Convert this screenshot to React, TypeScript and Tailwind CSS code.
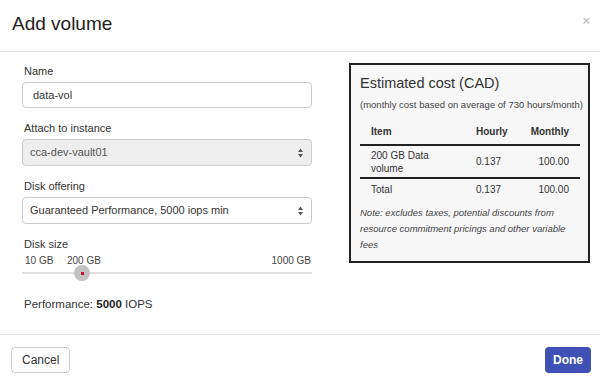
import React from 'react';

const font = { fontFamily: '"Liberation Sans", Arial, sans-serif' };

function SelectArrows() {
  return (
    <svg width="7" height="11" viewBox="0 0 7 11" className="absolute right-[7px] top-1/2 -translate-y-1/2">
      <path d="M3.5 1 L6 4.5 L1 4.5 Z" fill="#555" />
      <path d="M3.5 10 L6 6.5 L1 6.5 Z" fill="#555" />
    </svg>
  );
}

function Field({ label, children }: { label: string; children: React.ReactNode }) {
  return (
    <div className="flex flex-col">
      <label className="text-[11px] leading-[16px] text-[#333] pl-[2px] mb-[3px]">{label}</label>
      {children}
    </div>
  );
}

export default function App() {
  return (
    <div className="w-[600px] h-[382px] bg-white flex flex-col text-[#333]" style={font}>
      <div className="h-[52px] border-b border-[#e5e5e5] flex items-start justify-between pl-[12px] pr-[10px] pt-[12px]">
        <h1 className="text-[19px] leading-[24px] text-[#222]">Add volume</h1>
        <span className="text-[13px] leading-[16px] text-[#c4c4c4] font-bold mt-[1px]">×</span>
      </div>

      <div className="flex-1 flex pt-[11px] pl-[22px]">
        <div className="w-[290px] flex flex-col gap-[12px]">
          <Field label="Name">
            <div className="h-[26px] border border-[#ccc] rounded-[4px] px-[10px] flex items-center text-[11px]">data-vol</div>
          </Field>
          <Field label="Attach to instance">
            <div className="relative h-[27px] border border-[#ccc] rounded-[4px] bg-[#eee] px-[7px] flex items-center text-[11px] text-[#555]">
              cca-dev-vault01
              <SelectArrows />
            </div>
          </Field>
          <Field label="Disk offering">
            <div className="relative h-[27px] border border-[#ccc] rounded-[4px] px-[7px] flex items-center text-[11px] text-[#333]">
              Guaranteed Performance, 5000 iops min
              <SelectArrows />
            </div>
          </Field>
          <div className="flex flex-col">
            <span className="text-[11px] leading-[16px] pl-[2px] mb-[3px]">Disk size</span>
            <div className="relative h-[12px] text-[10px] leading-[12px] text-[#444]">
              <span className="absolute left-[3px]">10 GB</span>
              <span className="absolute left-[45px]">200 GB</span>
              <span className="absolute right-[1px]">1000 GB</span>
            </div>
            <div className="relative h-[16px] -mt-[2px] flex items-center">
              <div className="w-full h-[2px] bg-[#e0e0e0]" />
              <div className="absolute left-[52px] top-0 w-[16px] h-[16px] rounded-full bg-[#c2c2c2] flex items-center justify-center">
                <div className="w-[3px] h-[3px] bg-[#c8102e]" />
              </div>
            </div>
            <div className="text-[11.5px] leading-[16px] pl-[2px] mt-[15px]">
              Performance: <b className="text-[#222]">5000</b> IOPS
            </div>
          </div>
        </div>

        <div className="ml-[37px] w-[241px] h-[200px] border-2 border-[#222] bg-[#f7f7f7] px-[9px] pt-[8px]">
          <div className="text-[14.5px] leading-[20px] text-[#333]">Estimated cost (CAD)</div>
          <div className="text-[9.5px] leading-[12px] text-[#444] mt-[6px] whitespace-nowrap">(monthly cost based on average of 730 hours/month)</div>
          <table className="w-[220px] mt-[8px] text-[10px] text-[#333]">
            <thead>
              <tr className="border-b-2 border-[#222]">
                <th className="text-left font-bold pl-[11px] h-[26px] align-middle">Item</th>
                <th className="text-left font-bold pl-[9px] align-middle">Hourly</th>
                <th className="text-right font-bold pr-[11px] align-middle">Monthly</th>
              </tr>
            </thead>
            <tbody>
              <tr className="border-b-2 border-[#222]">
                <td className="pl-[11px] leading-[13px] h-[33px] align-middle w-[107px]">200 GB Data<br />volume</td>
                <td className="pl-[9px] align-middle">0.137</td>
                <td className="text-right pr-[11px] align-middle">100.00</td>
              </tr>
              <tr>
                <td className="pl-[11px] h-[21px] align-middle">Total</td>
                <td className="pl-[9px] align-middle">0.137</td>
                <td className="text-right pr-[11px] align-middle">100.00</td>
              </tr>
            </tbody>
          </table>
          <p className="italic text-[9.5px] leading-[16px] text-[#444] mt-[6px]">
            Note: excludes taxes, potential discounts from resource commitment pricings and other variable fees
          </p>
        </div>
      </div>

      <div className="h-[48px] border-t border-[#e5e5e5] flex items-start justify-between px-[11px] pt-[12px] pr-[9px]">
        <button className="h-[26px] px-[10px] border border-[#ccc] rounded-[4px] bg-white text-[12px] text-[#333]">Cancel</button>
        <button className="h-[26px] px-[8px] rounded-[4px] bg-[#3f51b5] text-[12px] font-bold text-white">Done</button>
      </div>
    </div>
  );
}
